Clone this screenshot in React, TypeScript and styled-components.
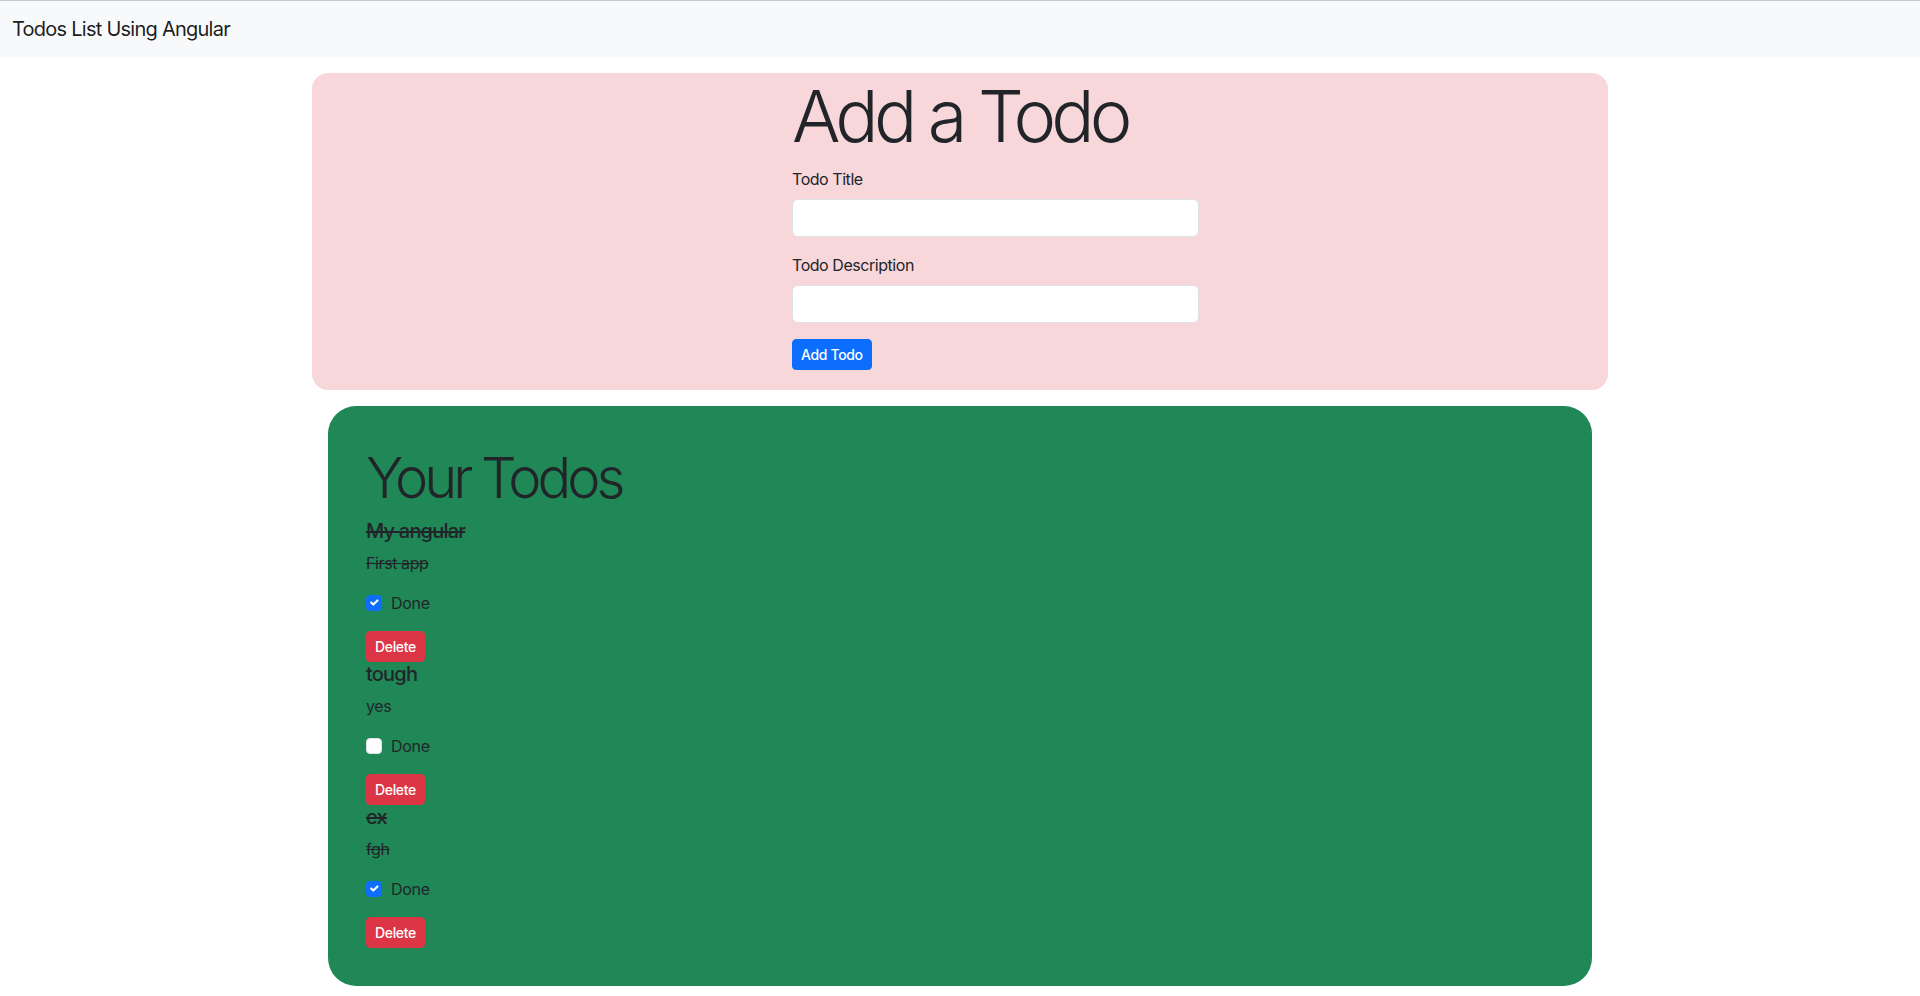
import React from "react";
import styled, { createGlobalStyle } from "styled-components";

const GlobalStyle = createGlobalStyle`
  html, body { margin: 0; padding: 0; }
  body {
    font-family: Inter, "Noto Sans", "Liberation Sans", sans-serif;
    color: #212529;
    background: #ffffff;
    font-size: 16px;
    line-height: 1.5;
    border-top: 1px solid #c9c9c9;
  }
  * { box-sizing: border-box; }
`;

const Navbar = styled.nav`
  background: #f8f9fa;
  height: 56px;
  padding: 8px 12px;
  display: flex;
  align-items: center;
`;

const Brand = styled.a`
  font-size: 20px;
  line-height: 30px;
  padding: 5px 0;
  color: rgba(0, 0, 0, 0.9);
  text-decoration: none;
  letter-spacing: -0.75px;
`;

const Main = styled.main`
  max-width: 1296px;
  margin: 16px auto 0;
  display: flex;
  flex-direction: column;
  gap: 16px;
`;

const AddCard = styled.section`
  background: #f8d7da;
  border-radius: 16px;
  padding: 0 0 20px 480px;
`;

const Form = styled.form`
  width: 407px;
  display: flex;
  flex-direction: column;
`;

const Display = styled.h1<{ $size: number; $gap: number }>`
  margin: 0 0 ${(p) => p.$gap}px;
  font-size: ${(p) => p.$size}px;
  font-weight: 300;
  line-height: 1.2;
  letter-spacing: ${(p) => (p.$size > 60 ? "-4.8px" : "-4px")};
`;

const Field = styled.div`
  margin-bottom: 16px;
  display: flex;
  flex-direction: column;
`;

const Label = styled.label`
  margin-bottom: 8px;
  font-size: 16px;
  line-height: 24px;
  letter-spacing: -0.45px;
`;

const Input = styled.input`
  height: 38px;
  border: 1px solid #dee2e6;
  border-radius: 6px;
  background: #fff;
  padding: 6px 12px;
  font: inherit;
`;

const Button = styled.button<{ $variant: "primary" | "danger" }>`
  align-self: flex-start;
  font-family: inherit;
  font-size: 14px;
  line-height: 21px;
  font-weight: 500;
  padding: 4px 8px;
  border-radius: 4px;
  border: 1px solid ${(p) => (p.$variant === "primary" ? "#0d6efd" : "#dc3545")};
  background: ${(p) => (p.$variant === "primary" ? "#0d6efd" : "#dc3545")};
  color: #fff;
  cursor: pointer;
  letter-spacing: -0.35px;
`;

const TodosCard = styled.section`
  background: #208757;
  border-radius: 28px;
  margin: 0 16px;
  padding: 39px 38px 38px;
`;

const TodoItem = styled.div`
  display: flex;
  flex-direction: column;
`;

const TodoTitle = styled.h5<{ $done: boolean }>`
  margin: 0 0 8px;
  font-size: 20px;
  line-height: 1.2;
  font-weight: 500;
  letter-spacing: -0.8px;
  text-decoration: ${(p) => (p.$done ? "line-through" : "none")};
`;

const TodoDesc = styled.p<{ $done: boolean }>`
  margin: 0 0 16px;
  font-size: 16px;
  line-height: 24px;
  letter-spacing: -0.4px;
  text-decoration: ${(p) => (p.$done ? "line-through" : "none")};
`;

const Check = styled.div`
  display: flex;
  align-items: flex-start;
  gap: 9px;
  min-height: 24px;
  margin-bottom: 16px;
  font-size: 16px;
  line-height: 24px;
  letter-spacing: -0.3px;
`;

const Box = styled.span<{ $checked: boolean }>`
  width: 16px;
  height: 16px;
  margin-top: 4px;
  border-radius: 4px;
  display: inline-flex;
  align-items: center;
  justify-content: center;
  background: ${(p) => (p.$checked ? "#0d6efd" : "#ffffff")};
  border: 1px solid ${(p) => (p.$checked ? "#0d6efd" : "#dee2e6")};
`;

const todos = [
  { title: "My angular", desc: "First app", done: true },
  { title: "tough", desc: "yes", done: false },
  { title: "ex", desc: "fgh", done: true },
];

export default function App() {
  return (
    <>
      <GlobalStyle />
      <Navbar>
        <Brand href="#">Todos List Using Angular</Brand>
      </Navbar>
      <Main>
        <AddCard>
          <Form onSubmit={(e) => e.preventDefault()}>
            <Display $size={72} $gap={8}>Add a Todo</Display>
            <Field>
              <Label htmlFor="title">Todo Title</Label>
              <Input id="title" type="text" />
            </Field>
            <Field>
              <Label htmlFor="desc">Todo Description</Label>
              <Input id="desc" type="text" />
            </Field>
            <Button $variant="primary" type="submit">Add Todo</Button>
          </Form>
        </AddCard>
        <TodosCard>
          <Display $size={56} $gap={6}>Your Todos</Display>
          {todos.map((t, i) => (
            <TodoItem key={i}>
              <TodoTitle $done={t.done}>{t.title}</TodoTitle>
              <TodoDesc $done={t.done}>{t.desc}</TodoDesc>
              <Check>
                <Box $checked={t.done}>
                  {t.done && (
                    <svg width="15" height="15" viewBox="0 0 20 20" fill="none">
                      <path
                        d="M6 10l3 3 6-6"
                        stroke="#fff"
                        strokeWidth="3"
                        strokeLinecap="round"
                        strokeLinejoin="round"
                      />
                    </svg>
                  )}
                </Box>
                <span>Done</span>
              </Check>
              <Button $variant="danger" type="button">Delete</Button>
            </TodoItem>
          ))}
        </TodosCard>
      </Main>
    </>
  );
}
